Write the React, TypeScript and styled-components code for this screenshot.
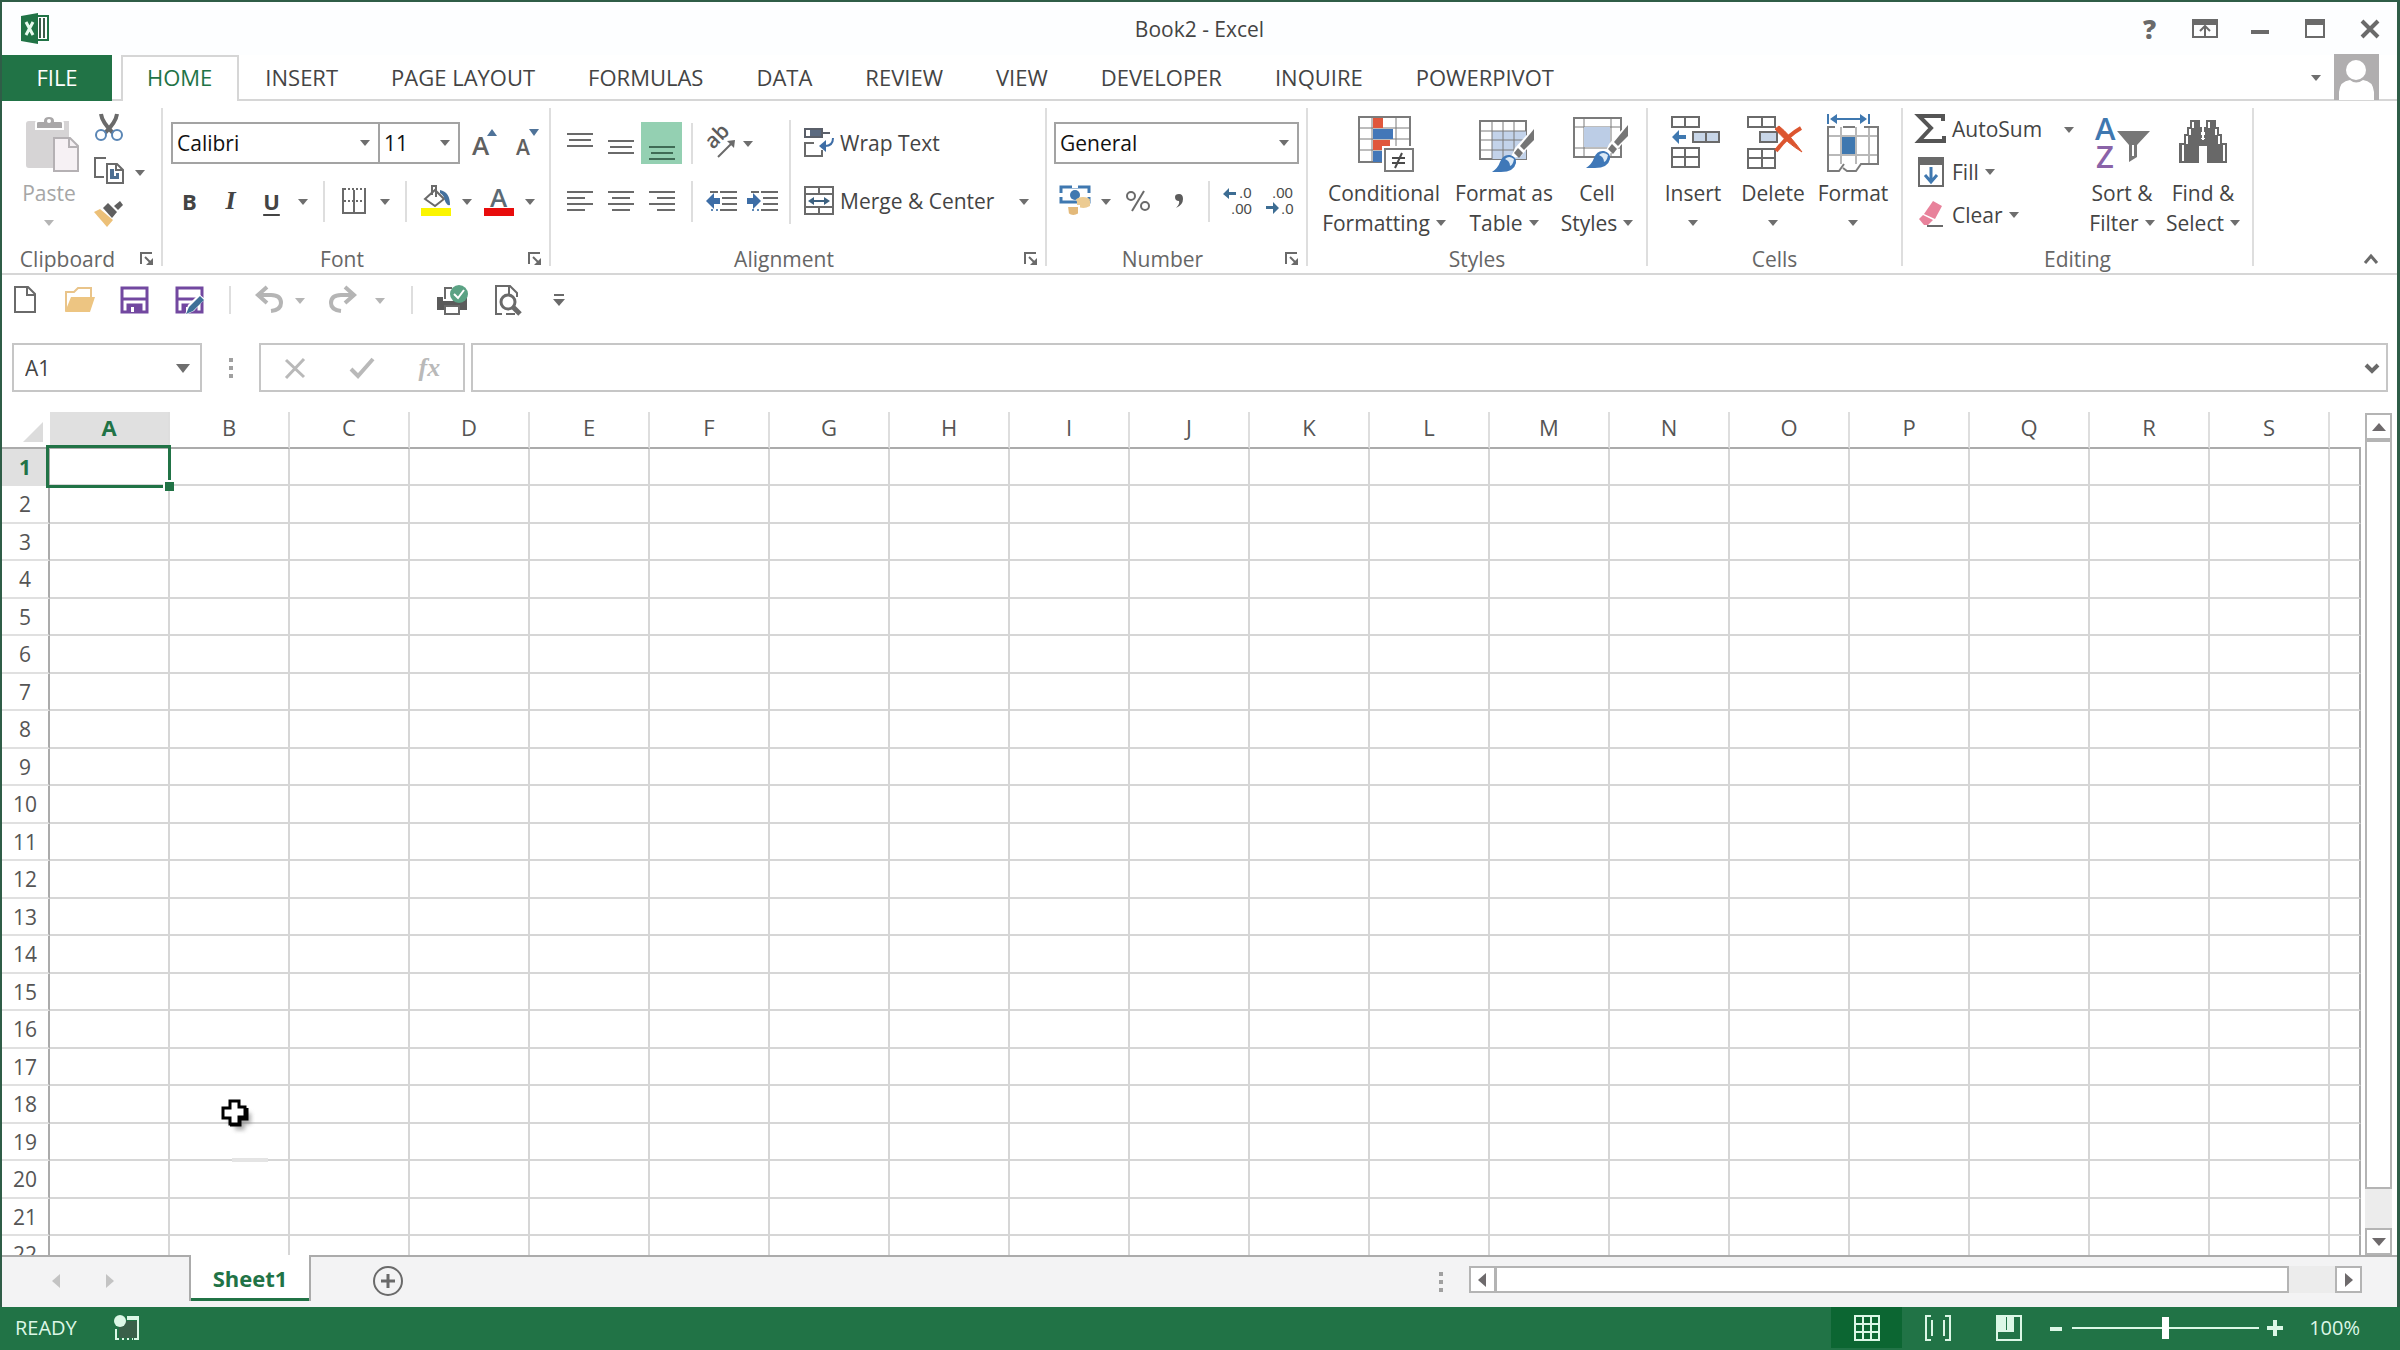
import React from "react";
import styled, { createGlobalStyle, css } from "styled-components";

const c = {
  green: "#217346",
  frame: "#2f5d47",
  ink: "#444444",
  mute: "#666666",
  icon: "#6a6a6a",
  blue: "#3f78b0",
  line: "#d6d6d6",
  edge: "#b4b4b4",
  off: "#b9b9b9",
  pale: "#dcf7e6",
};

const sans = `"Open Sans", "Noto Sans", "Liberation Sans", sans-serif`;
const serif = `"Liberation Serif", "DejaVu Serif", serif`;

const GlobalStyle = createGlobalStyle`
  *, *::before, *::after { box-sizing: border-box; }
  body { margin: 0; background: #fff; overflow: hidden; }
  button, select, input { font: inherit; color: inherit; }
  svg { overflow: visible; }
`;

/* ---------- window frame ---------- */

const Window = styled.div`
  display: flex;
  flex-direction: column;
  height: 100vh;
  font-family: ${sans};
  font-size: 21px;
  color: ${c.ink};
  background: #fff;
`;

const Frame = styled.div`
  flex: 1;
  min-height: 0;
  display: flex;
  flex-direction: column;
  border: solid ${c.frame};
  border-width: 2px 3px 0 2px;
`;

const Plain = styled.button`
  display: flex;
  align-items: center;
  justify-content: center;
  padding: 0;
  border: 0;
  background: none;
  white-space: nowrap;
`;

const TitleBar = styled.header`
  display: grid;
  grid-template-columns: 1fr auto 1fr;
  align-items: center;
  height: 53px;
  background: #fdfeff;
`;

const Brand = styled.div`
  display: flex;
  padding-left: 16px;
`;

const Title = styled.h1`
  margin: 0;
  font-size: 21px;
  font-weight: 400;
`;

const Controls = styled.div`
  display: flex;
  justify-content: flex-end;
`;

const Control = styled(Plain)`
  width: 55px;
  height: 44px;
  font-size: 26px;
  font-weight: 800;
  color: ${c.icon};
`;

/* ---------- tabs ---------- */

const TabRow = styled.nav`
  display: flex;
  height: 46px;
  border-bottom: 2px solid ${c.line};
`;

const FileTab = styled(Plain)`
  width: 110px;
  height: 46px;
  margin-right: 9px;
  padding-bottom: 2px;
  font-size: 22px;
  color: #fff;
  background: ${c.green};
`;

const Tab = styled(Plain)<{ $on?: boolean }>`
  height: 46px;
  padding: 0 27px 2px 26px;
  font-size: 22px;
  ${(p) =>
    p.$on &&
    css`
      padding: 0 25px 4px 24px;
      color: ${c.green};
      background: #fff;
      border: 2px solid ${c.line};
      border-bottom: 0;
    `}
`;

const Account = styled.div`
  display: flex;
  align-items: center;
  margin-left: auto;
  padding-right: 18px;
`;

/* ---------- ribbon ---------- */

const Ribbon = styled.section`
  display: flex;
  padding: 7px 0 3px;
  border-bottom: 2px solid ${c.line};
`;

const GroupBox = styled.section<{ $w: number }>`
  display: flex;
  flex-direction: column;
  width: ${(p) => p.$w}px;
`;

const GroupBody = styled.div<{ $pad?: number }>`
  display: flex;
  height: 140px;
  padding-left: ${(p) => p.$pad || 0}px;
`;

const GroupFoot = styled.div`
  display: flex;
  height: 22px;
  line-height: 22px;
  color: ${c.mute};
`;

const GroupName = styled.h2`
  flex: 1;
  margin: 0;
  font-size: 21px;
  font-weight: 400;
  text-align: center;
`;

const Launcher = styled(Plain)`
  width: 28px;
`;

const Divider = styled.div`
  width: 2px;
  height: 158px;
  background: #dedede;
`;

const Stack = styled.div<{ $w?: number; $pad?: number }>`
  display: flex;
  flex-direction: column;
  gap: 16px;
  padding: 14px 0 0 ${(p) => p.$pad || 0}px;
  ${(p) => p.$w && `width: ${p.$w}px;`}
`;

const Row = styled.div<{ $pad?: number }>`
  display: flex;
  align-items: center;
  height: 42px;
  padding-left: ${(p) => p.$pad || 0}px;
`;

const Triple = styled.div<{ $w?: number; $pad?: number }>`
  display: grid;
  grid-template-rows: repeat(3, 43px);
  align-content: start;
  padding-left: ${(p) => p.$pad || 0}px;
  ${(p) => p.$w && `width: ${p.$w}px;`}
`;

const Split = styled.div`
  display: flex;
`;

const Tool = styled(Plain)<{ $on?: boolean }>`
  width: 41px;
  height: 42px;
  font-size: 22px;
  background: ${(p) => (p.$on ? "#94d0b2" : "none")};
`;

const Bold = styled(Tool)`
  font-weight: 700;
`;
const Italic = styled(Tool)`
  font-family: ${serif};
  font-size: 26px;
  font-weight: 700;
  font-style: italic;
`;
const Under = styled(Tool)`
  font-weight: 700;
  text-decoration: underline;
  text-decoration-thickness: 2px;
  text-underline-offset: 4px;
`;

const Drop = styled(Plain)<{ $w?: number; $l?: number }>`
  width: ${(p) => p.$w || 22}px;
  height: 42px;
  margin-left: ${(p) => p.$l || 0}px;
  padding-top: 2px;
`;

const Bar = styled.div<{ $tall?: boolean }>`
  width: 2px;
  height: ${(p) => (p.$tall ? 104 : 41)}px;
  margin: ${(p) => (p.$tall ? "12px 0 0" : "0 8px 0 9px")};
  background: #dedede;
`;

const TextTool = styled(Plain)`
  justify-content: flex-start;
  height: 42px;
  gap: 6px;
`;

const Big = styled(Plain)<{ $w: number; $off?: boolean }>`
  flex-direction: column;
  justify-content: flex-start;
  gap: 6px;
  width: ${(p) => p.$w}px;
  height: 140px;
  padding-top: 4px;
  line-height: 30px;
  color: ${(p) => (p.$off ? "#a6a6a6" : c.ink)};
`;

const BigLabel = styled.span`
  display: flex;
  flex-direction: column;
  align-items: center;
`;

const Line2 = styled.span`
  display: flex;
  align-items: center;
  gap: 6px;
  height: 30px;
`;

const Pick = styled.label<{ $w: number; $join?: boolean }>`
  display: grid;
  align-items: center;
  width: ${(p) => p.$w}px;
  height: 42px;
  margin: ${(p) => (p.$join ? "0 4px 0 -2px" : "0")};
  border: 2px solid #a3a3a3;
  color: #111;
  & > * { grid-area: 1 / 1; }
  & > svg { justify-self: end; margin-right: 8px; pointer-events: none; }
`;

const Select = styled.select`
  width: 100%;
  height: 38px;
  padding: 0 20px 0 4px;
  border: 0;
  background: none;
  appearance: none;
`;

const Collapse = styled(Plain)`
  align-self: flex-end;
  width: 40px;
  height: 22px;
  margin: 0 6px 0 auto;
`;

/* ---------- quick access and formula bar ---------- */

const Quick = styled.div`
  display: flex;
  align-items: center;
  height: 50px;
  padding-left: 2px;
`;

const QuickTool = styled(Plain)<{ $w: number }>`
  width: ${(p) => p.$w}px;
  height: 40px;
`;

const QuickBar = styled.div<{ $l: number; $r: number }>`
  width: 2px;
  height: 28px;
  margin: 0 ${(p) => p.$r}px 0 ${(p) => p.$l}px;
  background: #dedede;
`;

const Formula = styled.div`
  display: flex;
  padding: 18px 9px 20px 10px;
`;

const Box = styled.div<{ $w?: number }>`
  display: flex;
  align-items: center;
  height: 49px;
  border: 2px solid #c6c6c6;
  ${(p) => (p.$w ? `width: ${p.$w}px;` : "flex: 1;")}
`;

const FormulaBox = styled(Box)`
  margin-left: 6px;
`;

const Field = styled.input`
  flex: 1;
  min-width: 0;
  height: 44px;
  padding: 0 0 0 11px;
  border: 0;
  outline: 0;
  background: none;
`;

const Grip = styled.div<{ $w: number }>`
  display: flex;
  align-items: center;
  justify-content: center;
  width: ${(p) => p.$w}px;
`;

const FormulaTool = styled(Plain)`
  flex: 1;
  height: 44px;
  color: ${c.off};
  font-family: ${serif};
  font-style: italic;
  font-size: 26px;
  font-weight: 700;
`;

/* ---------- sheet ---------- */

const Sheet = styled.main`
  flex: 1;
  min-height: 0;
  display: flex;
`;

const GridClip = styled.div`
  position: relative;
  flex: 1;
  min-width: 0;
  overflow: hidden;
`;

const Table = styled.table`
  width: 100%;
  table-layout: fixed;
  border-collapse: separate;
  border-spacing: 0;
`;

const ColHead = styled.th<{ $on?: boolean }>`
  height: 37px;
  padding: 0 0 5px;
  font-size: 22px;
  line-height: 24px;
  font-weight: ${(p) => (p.$on ? 700 : 400)};
  color: ${(p) => (p.$on ? c.green : "#555")};
  background: ${(p) => (p.$on ? "#e0e0e0" : "#fff")};
  border-right: 2px solid #dedede;
  border-bottom: 2px solid #ababab;
  &:last-child { border-right: 0; }
`;

const Corner = styled.td`
  height: 37px;
  padding: 0 6px 4px 0;
  text-align: right;
  vertical-align: bottom;
  line-height: 0;
  border-bottom: 2px solid #ababab;
`;

const RowHead = styled.th<{ $on?: boolean }>`
  padding: 0;
  font-size: 21px;
  line-height: 24px;
  font-weight: ${(p) => (p.$on ? 700 : 400)};
  color: ${(p) => (p.$on ? c.green : "#555")};
  background: ${(p) => (p.$on ? "#e0e0e0" : "#fff")};
  border-right: 2px solid #ababab;
  border-bottom: 2px solid #e0e0e0;
`;

const Cell = styled.td`
  position: relative;
  padding: 0;
  border-right: 2px solid ${c.line};
  border-bottom: 2px solid ${c.line};
  &:last-child { border-right-color: #ababab; }
`;

const Tr = styled.tr`
  height: 37px;
  &:nth-child(even) { height: 38px; }
`;

const Active = styled.div`
  position: absolute;
  z-index: 1;
  inset: -4px -3px -4px -4px;
  border: 3px solid ${c.green};
  &::after {
    content: "";
    position: absolute;
    right: -6px;
    bottom: -6px;
    width: 11px;
    height: 11px;
    background: ${c.green};
    border: solid #fff;
    border-width: 2px 0 0 2px;
  }
`;

const Pointer = styled.svg`
  position: absolute;
  left: 216px;
  top: 684px;
`;

const VScroll = styled.div`
  display: flex;
  flex-direction: column;
  width: 36px;
  padding: 1px 5px 0 4px;
`;

const Step = styled(Plain)`
  flex: none;
  width: 27px;
  height: 27px;
  border: 2px solid ${c.edge};
  background: #fff;
`;

const Thumb = styled.div<{ $grow: number; $dir: "x" | "y" }>`
  flex: ${(p) => p.$grow};
  background: #fff;
  border: 2px solid ${c.edge};
  ${(p) => (p.$dir === "x" ? "border-left-width: 1px;" : "")}
`;

const Track = styled.div`
  flex: 1;
  background: #ececec;
`;

/* ---------- sheet tabs ---------- */

const Bottom = styled.div`
  display: flex;
  height: 52px;
`;

const Strip = styled.div<{ $w?: string; $first?: boolean }>`
  display: flex;
  ${(p) => (p.$w ? `width: ${p.$w};` : "flex: 1;")}
  background: #f3f3f4;
  border-top: 2px solid #ababab;
  padding-left: ${(p) => (p.$first ? 28 : 0)}px;
`;

const Nav = styled(Plain)`
  width: 53px;
  height: 48px;
`;

const SheetTab = styled(Plain)`
  width: 122px;
  height: 46px;
  font-size: 22px;
  font-weight: 700;
  color: ${c.green};
  background: #fff;
  border: solid #ababab;
  border-width: 0 2px 0 2px;
  box-shadow: inset 0 -3px 0 ${c.green};
`;

const TabHolder = styled.div`
  background: #f3f3f4;
`;

const AddSheet = styled(Plain)`
  width: 154px;
  height: 48px;
`;

const HScroll = styled.div`
  flex: 1;
  display: flex;
  height: 27px;
  margin: 9px 35px 0 26px;
`;

/* ---------- status bar ---------- */

const Status = styled.footer`
  display: flex;
  align-items: center;
  height: 43px;
  padding: 0 40px 2px 15px;
  font-size: 20px;
  color: ${c.pale};
  background: ${c.green};
`;

const Ready = styled.span`
  margin-right: 36px;
`;

const ViewTool = styled(Plain)<{ $on?: boolean }>`
  width: 71px;
  height: 41px;
  background: ${(p) => (p.$on ? "#0c6632" : "none")};
`;

const Views = styled.div`
  display: flex;
  margin-left: auto;
`;

const ZoomStep = styled(Plain)`
  width: 24px;
  height: 41px;
`;

const Slider = styled.input`
  width: 187px;
  height: 24px;
  margin: 0 4px;
  appearance: none;
  background: linear-gradient(${c.pale}, ${c.pale}) center / 100% 2px no-repeat;
  &::-webkit-slider-thumb {
    appearance: none;
    width: 7px;
    height: 22px;
    background: #fff;
  }
`;

const Percent = styled.span`
  margin-left: 22px;
`;

/* ---------- icons ---------- */

type IcProps = { w?: number; h?: number; s?: string; sw?: number; children: React.ReactNode };
const Ic = ({ w = 30, h = 30, s = c.icon, sw = 2, children }: IcProps) => (
  <svg width={w} height={h} viewBox={`0 0 ${w} ${h}`} fill="none" stroke={s} strokeWidth={sw} aria-hidden="true">
    {children}
  </svg>
);

const Down = ({ off, big }: { off?: boolean; big?: boolean }) => (
  <svg width={big ? 14 : 10} height={big ? 9 : 6} viewBox="0 0 10 6" preserveAspectRatio="none" aria-hidden="true">
    <path d="M0 0H10L5 6Z" fill={off ? "#b5b5b5" : "#6e6e6e"} />
  </svg>
);

const Arrowhead = ({ d, off }: { d: "l" | "r" | "u" | "d"; off?: boolean }) => {
  const path = { l: "M10 0V14L2 7Z", r: "M3 0V14L11 7Z", u: "M0 11H14L7 3Z", d: "M0 3H14L7 11Z" }[d];
  return (
    <svg width="14" height="14" viewBox="0 0 14 14" aria-hidden="true">
      <path d={path} fill={off ? "#c3c3c3" : "#6e6a6c"} />
    </svg>
  );
};

const Logo = () => (
  <Ic w={34} h={32} s="none">
    <path d="M17 3H30V27H17Z" fill="#fff" stroke={c.green} />
    <path d="M22 5V25M26 5V25" stroke="#3d5c4a" strokeWidth="2" />
    <path d="M3 3L20 0V31L3 28Z" fill={c.green} />
    <path d="M8 9L15 22M15 9L8 22" stroke="#e8fbee" strokeWidth="3" />
  </Ic>
);

const Lines = ({ rows, on }: { rows: [number, number, number][]; on?: boolean }) => (
  <Ic w={28} h={36} s={on ? "#3f6b55" : c.icon}>
    {rows.map(([y, a, b]) => (
      <path key={y} d={`M${a} ${y}H${b}`} />
    ))}
  </Ic>
);

const PasteIcon = () => (
  <Ic w={60} h={60} s="none">
    <path d="M10 9H50V26H34V56H10Q7 56 7 53V12Q7 9 10 9Z" fill="#d6d4d5" />
    <path d="M17 17V11Q17 9 20 9H24Q24 4 30 4T36 9H41Q44 9 44 11V17Z" fill="#a9a7a8" stroke="#fff" strokeWidth="2" />
    <circle cx="30" cy="9" r="2" fill="#fff" />
    <path d="M35 26H51L59 34V59H35Z" fill="#f6f1f4" stroke="#b5b1b4" strokeWidth="2" />
    <path d="M50 26V35H59" stroke="#b5b1b4" strokeWidth="2" />
  </Ic>
);

const CutIcon = () => (
  <Ic>
    <path d="M7 0Q8 8 19 19M23 0Q22 8 11 19" strokeWidth="4" />
    <circle cx="7" cy="21" r="5" stroke="#5a86b5" />
    <circle cx="23" cy="21" r="5" stroke="#5a86b5" />
  </Ic>
);

const CopyIcon = () => (
  <Ic>
    <path d="M10 20H1V1H12" />
    <path d="M13 7H23L29 13V26H13Z" fill="#fff" />
    <path d="M16 12V22H25V16H22V19H20V12Z" fill="#4d6f92" stroke="none" />
    <path d="M22 7V13H29" />
  </Ic>
);

const PainterIcon = () => (
  <Ic s="none">
    <path d="M0 12L6 9L19 20L13 27Z" fill="#ecc078" />
    <path d="M9 8L14 3L23 12L18 18Z" fill="#5f5f5f" />
    <path d="M20 6L26 1L29 5L24 10Z" fill="#5f5f5f" />
  </Ic>
);

const LaunchIcon = () => (
  <Ic w={14} h={14}>
    <path d="M1 12V1H12" />
    <path d="M5 5L11 11" />
    <path d="M13 6V13H6Z" fill={c.icon} stroke="none" />
  </Ic>
);

const SizeIcon = ({ up }: { up?: boolean }) => (
  <Ic w={32} h={34} s="none">
    <text x={up ? 3 : 6} y="29" fontFamily="Open Sans" fontWeight="600" fontSize={up ? 26 : 21} fill="#606060">A</text>
    {up ? <path d="M18 10L23 3L28 10Z" fill="#4f7399" /> : <path d="M19 3H29L24 10Z" fill="#4f7399" />}
  </Ic>
);

const BorderIcon = () => (
  <Ic w={26} h={26}>
    <path d="M2 0V25H24V0" />
    <path d="M13 2V24" />
    <path d="M3 1H24M3 13H24" strokeDasharray="2 2" />
  </Ic>
);

const FillIcon = () => (
  <Ic w={32} h={34} s="none">
    <path d="M5 15L15 6L24 15L15 22Z" fill="#fff" stroke={c.icon} strokeWidth="2" />
    <path d="M12 11V2H16V13" stroke={c.icon} strokeWidth="2" />
    <path d="M20 6Q30 8 30 21Q27 22 25 17Q24 11 20 9Z" fill="#44719e" />
    <path d="M1 24H31V32H1Z" fill="#fbf500" />
  </Ic>
);

const FontColorIcon = () => (
  <Ic w={32} h={34} s="none">
    <text x="7" y="23" fontFamily="Open Sans" fontWeight="600" fontSize="26" fill="#5c6a74">A</text>
    <path d="M1 24H31V32H1Z" fill="#e80c0c" />
  </Ic>
);

const AngleIcon = () => (
  <Ic w={34} h={34}>
    <text x="0" y="0" transform="translate(8 24) rotate(-45)" fontFamily="Open Sans" fontWeight="600" fontSize="21" fill="#5c5c5c" stroke="none">ab</text>
    <path d="M13 31L28 16" />
    <path d="M30 14L22 15L29 22Z" fill={c.icon} stroke="none" />
  </Ic>
);

const IndentIcon = ({ out }: { out?: boolean }) => (
  <Ic w={32} h={24}>
    <path d="M4 3H12M14 3H31M16 9H31M16 15H31M14 21H31" />
    <path d="M5 21H13" strokeDasharray="2 3" stroke="#5f88b5" />
    {out ? (
      <path d="M0 12L8 4V9H14V15H8V20Z" fill="#3d6da6" stroke="none" />
    ) : (
      <path d="M14 12L6 4V9H0V15H6V20Z" fill="#3d6da6" stroke="none" />
    )}
  </Ic>
);

const WrapIcon = () => (
  <Ic>
    <path d="M1 1H18V9H1Z" fill="#5b6a80" stroke="#5a5f69" />
    <path d="M2 2H6V8H2Z" fill="#fff" stroke="none" />
    <path d="M18 5H26" stroke="#5a5f69" />
    <path d="M10 15H1V28H18V22" />
    <path d="M29 10Q29 18 21 18" stroke="#3d6da6" />
    <path d="M15 18L22 12V24Z" fill="#3d6da6" stroke="none" />
  </Ic>
);

const MergeIcon = () => (
  <Ic>
    <path d="M1 1H29V28H1ZM1 8H29M1 21H29M15 1V8M15 21V28" />
    <path d="M6 15H24" stroke="#3d6180" />
    <path d="M4 15L10 11V19ZM26 15L20 11V19Z" fill="#3d6180" stroke="none" />
  </Ic>
);

const MoneyIcon = () => (
  <Ic w={32} h={32} s="none">
    <path d="M2 2H30V17H2Z" fill="#fff" stroke={c.blue} strokeWidth="3" />
    <path d="M0 8H4V12H0ZM28 8H32V12H28ZM13 0H19V3H13Z" fill="#fff" />
    <circle cx="16" cy="10" r="5" fill={c.blue} />
    <ellipse cx="24" cy="15" rx="7" ry="3" fill="#eccb92" />
    <path d="M18 16H31V21Q24 25 18 21Z" fill="#eccb92" />
    <path d="M8 21H20V29Q14 33 9 29Z" fill="#e3b97a" stroke="#fff" />
  </Ic>
);

const DecimalIcon = ({ more }: { more?: boolean }) => (
  <Ic w={32} h={32} s="none">
    <text fontFamily="Liberation Sans" fontSize="15" fill="#4c4c4c">
      <tspan x={more ? 16 : 8} y="13">{more ? ".0" : ".00"}</tspan>
      <tspan x={more ? 8 : 17} y="29">{more ? ".00" : ".0"}</tspan>
    </text>
    {more ? (
      <path d="M0 9L6 3V7H13V10H6V14Z" fill="#3d6d93" />
    ) : (
      <path d="M15 23L9 17V21H2V24H9V29Z" fill="#3d6d93" />
    )}
  </Ic>
);

const CondIcon = () => (
  <Ic w={60} h={60} s="#7b7b7b">
    <path d="M5 5H56V50H5Z" fill="#fff" />
    <path d="M18 5V50M42 5V50M5 16H56M5 27H56M5 38H56" strokeWidth="1" />
    <path d="M19 6H29V16H19ZM19 28H36V38H19Z" fill="#e0573c" stroke="none" />
    <path d="M19 17H39V27H19ZM19 39H29V50H19Z" fill="#4377b8" stroke="none" />
    <path d="M28 34H60V60H28Z" fill="#fff" stroke="none" />
    <path d="M31 37H59V59H31Z" fill="#fff" />
    <path d="M38 46H51M38 51H51M48 41L41 56" stroke="#4a4a4a" />
  </Ic>
);

const Brush = () => (
  <g stroke="none">
    <path d="M60 15V29L47 44L36 47L41 36Z" fill="#fff" />
    <path d="M60 17V28L50 38L46 34Z" fill="#757575" />
    <path d="M44 36L49 41L45 46L40 41Z" fill="#757575" />
    <path d="M18 60Q24 56 26 50Q29 42 36 43Q43 45 42 51Q40 60 27 60Z" fill="#3f78b8" />
    <path d="M31 47Q35 43 40 47Q39 53 36 54Q36 49 31 47Z" fill="#dceaf7" />
  </g>
);

const TableIcon = () => (
  <Ic w={60} h={60} s="#7b7b7b">
    <path d="M6 9H52V47H6Z" fill="#fff" />
    <path d="M18 19H52V47H18Z" fill="#c3d3ea" stroke="none" />
    <path d="M18 9V47M29 9V47M40 9V47M6 19H52M6 28H52M6 38H52" strokeWidth="1" />
    <Brush />
  </Ic>
);

const CellStyleIcon = () => (
  <Ic w={60} h={60} s="#7b7b7b">
    <path d="M7 6H54V45H7Z" fill="#fff" />
    <path d="M17 6V45M44 6V45M7 15H54M7 36H54" strokeWidth="1" />
    <path d="M17 15H43V35H17Z" fill="#bccde6" stroke="none" />
    <g transform="translate(1 -4)"><Brush /></g>
  </Ic>
);

const InsertIcon = () => (
  <Ic w={60} h={60}>
    <path d="M9 5H36V15H9ZM22 5V15M9 36H36V55H9ZM22 36V55M9 45H36" />
    <path d="M30 20H56V30H30ZM43 20V30" fill="#c8d6e8" />
    <path d="M9 25L16 18V23H23V27H16V32Z" fill={c.blue} stroke="none" />
  </Ic>
);

const DeleteIcon = () => (
  <Ic w={60} h={60}>
    <path d="M5 5H32V15H5ZM19 5V15M5 37H32V56H5ZM19 37V56M5 46H32" />
    <path d="M17 20H34V30H17Z" fill="#c8d6e8" />
    <path d="M32 17L36 14Q46 22 59 40Q44 31 32 17Z" fill="#dc552f" stroke="#dc552f" strokeWidth="1" />
    <path d="M58 16Q44 24 33 39" stroke="#dc552f" strokeWidth="4" />
  </Ic>
);

const FormatIcon = () => (
  <Ic w={60} h={60} s="#7b7b7b">
    <path d="M5 2V12M46 2V12M12 7H39" stroke={c.blue} />
    <path d="M7 7L14 2V12ZM44 7L37 2V12Z" fill={c.blue} stroke="none" />
    <path d="M18 15V52M33 15V52M46 15V52M5 24H55M5 43H55" stroke="#b9b9b9" />
    <path d="M12 15H5V59H16L21 52M20 15H32M41 15H55V52H38L33 59H24L20 56" />
    <path d="M19 25H32V42H19Z" fill={c.blue} stroke="none" />
  </Ic>
);

const SumIcon = () => (
  <Ic>
    <path d="M27 7V2H3L15 14L3 27H28V22" stroke="#555" strokeWidth="4" />
  </Ic>
);

const FillDownIcon = () => (
  <Ic>
    <path d="M3 1H27V29H3Z" fill="#fff" />
    <path d="M3 1H27V7H3Z" fill={c.icon} />
    <path d="M15 10V24M9 18L15 25L21 18" stroke={c.blue} strokeWidth="3" />
  </Ic>
);

const EraserIcon = () => (
  <Ic s="none">
    <path d="M17 1L26 6L19 19L8 14Z" fill="#e8829b" />
    <path d="M7 15L17 20L12 25H8L3 19Z" fill="#e8829b" />
    <path d="M11 26H27" stroke={c.icon} strokeWidth="2" />
  </Ic>
);

const SortIcon = () => (
  <Ic w={60} h={60} s="none">
    <text fontFamily="Open Sans" fontWeight="600" fontSize="31">
      <tspan x="3" y="28" fill={c.blue}>A</tspan>
      <tspan x="4" y="56" fill="#8a63a8">Z</tspan>
    </text>
    <path d="M25 19H58L45 33V45L37 50V33Z" fill="#777" />
    <path d="M41 33V44" stroke="#fff" strokeWidth="2" />
  </Ic>
);

const FindIcon = () => (
  <Ic w={60} h={60} s="none">
    <path d="M17 8H27V15H29V28H31V15H33V8H43V15H46V22H49V31H54V51H34V34H26V51H6V31H11V22H14V15H17Z" fill="#686868" />
    <path d="M19 10H21V16H19ZM35 10H37V16H35ZM16 17H18V23H16ZM42 17H44V23H42ZM13 24H15V32H13ZM45 24H47V32H45ZM9 33H11V49H9ZM50 33H52V49H50ZM28 20H32V23H28ZM28 26H32V27H28Z" fill="#fff" />
  </Ic>
);

const NewIcon = () => (
  <Ic>
    <path d="M5 2H18L25 9V27H5Z" />
    <path d="M17 2V10H25" />
  </Ic>
);
const OpenIcon = () => (
  <Ic w={32}>
    <path d="M2 26V7H10L14 3H27V12" stroke="#e9c48a" />
    <path d="M7 12H31L26 27H1Z" fill="#edc582" stroke="none" />
  </Ic>
);
const SaveIcon = ({ edit }: { edit?: boolean }) => (
  <Ic s="#7248a0" sw={3}>
    <path d="M3 3H28V27H3Z" />
    <path d="M3 14H28" />
    <path d="M9 27V20H22V27" fill="#7248a0" />
    <path d="M12 22H15V27H12Z" fill="#fff" stroke="none" />
    {edit && (
      <>
        <path d="M11 30L14 20L25 9L31 14L20 26Z" fill="#fff" stroke="none" />
        <path d="M12 29L15 22L26 11L30 15L19 26Z" fill="#3e7098" stroke="none" />
      </>
    )}
  </Ic>
);
const UndoIcon = ({ redo }: { redo?: boolean }) => (
  <Ic s="#b5b5b5" sw={4}>
    <g transform={redo ? "translate(30 0) scale(-1 1)" : undefined}>
      <path d="M5 10H17Q27 10 27 18Q27 25 17 26" />
      <path d="M13 2L4 10L13 18" />
    </g>
  </Ic>
);
const PrintIcon = () => (
  <Ic w={32}>
    <path d="M9 14V3H16" />
    <path d="M1 12H7V16H25V13H31V25H24V20H8V25H1Z" fill="#5b5b5b" stroke="none" />
    <path d="M9 21H23V29H9Z" fill="#fff" />
    <circle cx="23" cy="9" r="9" fill="#5ba284" stroke="none" />
    <path d="M18 9L22 13L28 5" stroke="#fff" />
  </Ic>
);
const PreviewIcon = () => (
  <Ic>
    <path d="M9 29H3V1H17L24 8V12M16 1V9M13 29H22" />
    <circle cx="15" cy="17" r="7" fill="#fff" strokeWidth="3" />
    <path d="M20 22L27 29" strokeWidth="5" />
  </Ic>
);
const Dots = () => (
  <svg width="4" height="20" viewBox="0 0 4 20" aria-hidden="true">
    <path d="M0 0H4V4H0ZM0 8H4V12H0ZM0 16H4V20H0Z" fill="#a0a0a0" />
  </svg>
);

/* ---------- parts ---------- */

const Group = ({ name, w, pad, launch, children }: {
  name: string; w: number; pad?: number; launch?: boolean; children: React.ReactNode;
}) => (
  <>
    <GroupBox $w={w}>
      <GroupBody $pad={pad}>{children}</GroupBody>
      <GroupFoot>
        <GroupName>{name}</GroupName>
        {launch && <Launcher aria-label={`${name} settings`}><LaunchIcon /></Launcher>}
      </GroupFoot>
    </GroupBox>
    <Divider />
  </>
);

const BigButton = ({ icon, top, second, w, off }: {
  icon: React.ReactNode; top: string; second?: string; w: number; off?: boolean;
}) => (
  <Big $w={w} $off={off}>
    {icon}
    <BigLabel>
      <span>{top}</span>
      <Line2>{second}<Down off={off} /></Line2>
    </BigLabel>
  </Big>
);

const Choice = ({ label, value, w, join }: { label: string; value: string; w: number; join?: boolean }) => (
  <Pick $w={w} $join={join}>
    <Select aria-label={label} defaultValue={value}><option>{value}</option></Select>
    <Down />
  </Pick>
);

const tabs = ["HOME", "INSERT", "PAGE LAYOUT", "FORMULAS", "DATA", "REVIEW", "VIEW", "DEVELOPER", "INQUIRE", "POWERPIVOT"];
const columns = "ABCDEFGHIJKLMNOPQRS".split("");
const rowNumbers = Array.from({ length: 22 }, (_, i) => i + 1);

export default function App() {
  return (
    <Window>
      <GlobalStyle />
      <Frame>
        <TitleBar>
          <Brand><Logo /></Brand>
          <Title>Book2 - Excel</Title>
          <Controls>
            <Control aria-label="Help">?</Control>
            <Control aria-label="Ribbon display options">
              <Ic w={26} h={20}><path d="M1 1H25V18H1Z" /><path d="M1 1H25V5H1Z" fill={c.icon} /><path d="M13 17V8M8 12L13 7L18 12" /></Ic>
            </Control>
            <Control aria-label="Minimize"><Ic w={18} h={16} sw={4}><path d="M0 11H18" /></Ic></Control>
            <Control aria-label="Maximize"><Ic w={20} h={20}><path d="M1 1H19V18H1Z" /><path d="M1 1H19V5H1Z" fill={c.icon} /></Ic></Control>
            <Control aria-label="Close"><Ic w={20} h={20} sw={4}><path d="M2 2L18 18M18 2L2 18" /></Ic></Control>
          </Controls>
        </TitleBar>

        <TabRow>
          <FileTab>FILE</FileTab>
          {tabs.map((t, i) => <Tab key={t} $on={i === 0}>{t}</Tab>)}
          <Account>
            <Drop $w={36} aria-label="Account menu"><Down /></Drop>
            <svg width="45" height="46" viewBox="0 0 45 46" role="img" aria-label="Account picture">
              <path d="M0 0H45V46H0Z" fill="#b0aeaf" />
              <circle cx="22" cy="16" r="10" fill="#fff" />
              <path d="M5 46V38Q6 27 16 26Q22 31 29 26Q39 27 40 38V46Z" fill="#fff" />
            </svg>
          </Account>
        </TabRow>

        <Ribbon>
          <Group name="Clipboard" w={159} pad={14} launch>
            <BigButton w={66} icon={<PasteIcon />} top="Paste" off />
            <Triple $pad={6}>
              <Tool aria-label="Cut"><CutIcon /></Tool>
              <Split>
                <Tool aria-label="Copy"><CopyIcon /></Tool>
                <Drop aria-label="Copy options"><Down /></Drop>
              </Split>
              <Tool aria-label="Format painter"><PainterIcon /></Tool>
            </Triple>
          </Group>

          <Group name="Font" w={386} launch>
            <Stack>
              <Row $pad={8}>
                <Choice label="Font" value="Calibri" w={209} />
                <Choice label="Font size" value="11" w={82} join />
                <Tool aria-label="Increase font size"><SizeIcon up /></Tool>
                <Tool aria-label="Decrease font size"><SizeIcon /></Tool>
              </Row>
              <Row $pad={6}>
                <Bold>B</Bold>
                <Italic>I</Italic>
                <Under>U</Under>
                <Drop aria-label="Underline options"><Down /></Drop>
                <Bar />
                <Tool aria-label="Borders"><BorderIcon /></Tool>
                <Drop aria-label="Border options"><Down /></Drop>
                <Bar />
                <Tool aria-label="Fill color"><FillIcon /></Tool>
                <Drop aria-label="Fill color options"><Down /></Drop>
                <Tool aria-label="Font color"><FontColorIcon /></Tool>
                <Drop aria-label="Font color options"><Down /></Drop>
              </Row>
            </Stack>
          </Group>

          <Group name="Alignment" w={494} launch>
            <Stack $w={238} $pad={8}>
              <Row>
                <Tool aria-label="Top align"><Lines rows={[[9, 1, 27], [15, 3, 25], [21, 1, 27]]} /></Tool>
                <Tool aria-label="Middle align"><Lines rows={[[16, 1, 27], [22, 3, 25], [28, 1, 27]]} /></Tool>
                <Tool $on aria-label="Bottom align"><Lines on rows={[[22, 1, 27], [28, 3, 25], [34, 1, 27]]} /></Tool>
                <Bar />
                <Tool aria-label="Orientation"><AngleIcon /></Tool>
                <Drop $w={12} aria-label="Orientation options"><Down /></Drop>
              </Row>
              <Row>
                <Tool aria-label="Align left"><Lines rows={[[9, 1, 27], [15, 1, 19], [21, 1, 27], [27, 1, 19]]} /></Tool>
                <Tool aria-label="Center"><Lines rows={[[9, 1, 27], [15, 5, 23], [21, 1, 27], [27, 5, 23]]} /></Tool>
                <Tool aria-label="Align right"><Lines rows={[[9, 1, 27], [15, 9, 27], [21, 1, 27], [27, 9, 27]]} /></Tool>
                <Bar />
                <Tool aria-label="Decrease indent"><IndentIcon out /></Tool>
                <Tool aria-label="Increase indent"><IndentIcon /></Tool>
              </Row>
            </Stack>
            <Bar $tall />
            <Stack $pad={13}>
              <Row><TextTool><WrapIcon />Wrap Text</TextTool></Row>
              <Row>
                <TextTool><MergeIcon />Merge &amp; Center</TextTool>
                <Drop $l={19} aria-label="Merge options"><Down /></Drop>
              </Row>
            </Stack>
          </Group>

          <Group name="Number" w={259} launch>
            <Stack $pad={7}>
              <Row><Choice label="Number format" value="General" w={245} /></Row>
              <Row>
                <Tool aria-label="Accounting format"><MoneyIcon /></Tool>
                <Drop aria-label="Accounting options"><Down /></Drop>
                <Tool aria-label="Percent style"><Ic w={26} h={24} sw={2}><circle cx="6" cy="7" r="4" /><circle cx="20" cy="17" r="4" /><path d="M19 2L7 22" /></Ic></Tool>
                <Tool aria-label="Comma style"><Ic w={14} h={16} s="none"><path d="M3 4Q3 1 7 1Q11 1 11 6Q11 12 4 15Q8 11 7 8Q3 8 3 4Z" fill="#5c5c5c" /></Ic></Tool>
                <Bar />
                <Tool aria-label="Increase decimal"><DecimalIcon more /></Tool>
                <Tool aria-label="Decrease decimal"><DecimalIcon /></Tool>
              </Row>
            </Stack>
          </Group>

          <Group name="Styles" w={338} pad={9}>
            <BigButton w={134} icon={<CondIcon />} top="Conditional" second="Formatting" />
            <BigButton w={106} icon={<TableIcon />} top="Format as" second="Table" />
            <BigButton w={80} icon={<CellStyleIcon />} top="Cell" second="Styles" />
          </Group>

          <Group name="Cells" w={253} pad={5}>
            <BigButton w={80} icon={<InsertIcon />} top="Insert" />
            <BigButton w={80} icon={<DeleteIcon />} top="Delete" />
            <BigButton w={80} icon={<FormatIcon />} top="Format" />
          </Group>

          <Group name="Editing" w={349}>
            <Triple $w={179} $pad={13}>
              <Split>
                <TextTool><SumIcon />AutoSum</TextTool>
                <Drop $l={16} aria-label="AutoSum options"><Down /></Drop>
              </Split>
              <TextTool><FillDownIcon />Fill<Down /></TextTool>
              <TextTool><EraserIcon />Clear<Down /></TextTool>
            </Triple>
            <BigButton w={80} icon={<SortIcon />} top="Sort &" second="Filter" />
            <BigButton w={82} icon={<FindIcon />} top="Find &" second="Select" />
          </Group>
          <Collapse aria-label="Collapse ribbon"><Ic w={16} h={12} sw={3}><path d="M2 10L8 3L14 10" /></Ic></Collapse>
        </Ribbon>

        <Quick>
          <QuickTool $w={41} aria-label="New"><NewIcon /></QuickTool>
          <QuickTool $w={69} aria-label="Open"><OpenIcon /></QuickTool>
          <QuickTool $w={40} aria-label="Save"><SaveIcon /></QuickTool>
          <QuickTool $w={70} aria-label="Save as"><SaveIcon edit /></QuickTool>
          <QuickBar $l={5} $r={17} />
          <QuickTool $w={41} aria-label="Undo"><UndoIcon /></QuickTool>
          <Drop aria-label="Undo history"><Down off /></Drop>
          <QuickTool $w={64} aria-label="Redo"><UndoIcon redo /></QuickTool>
          <Drop $w={10} aria-label="Redo history"><Down off /></Drop>
          <QuickBar $l={26} $r={18} />
          <QuickTool $w={41} aria-label="Quick print"><PrintIcon /></QuickTool>
          <QuickTool $w={71} aria-label="Print preview"><PreviewIcon /></QuickTool>
          <QuickTool $w={31} aria-label="Customize quick access toolbar"><Ic w={12} h={14}><path d="M1 2H11" /><path d="M0 6H12L6 13Z" fill={c.icon} stroke="none" /></Ic></QuickTool>
        </Quick>

        <Formula>
          <Box $w={190}>
            <Field aria-label="Name box" defaultValue="A1" />
            <Drop $w={34} aria-label="Names"><Down big /></Drop>
          </Box>
          <Grip $w={57}><Dots /></Grip>
          <Box $w={206}>
            <FormulaTool aria-label="Cancel"><Ic w={22} h={22} s={c.off} sw={3}><path d="M2 3L20 20M20 2L2 21" /></Ic></FormulaTool>
            <FormulaTool aria-label="Enter"><Ic w={26} h={22} s={c.off} sw={4}><path d="M2 12L9 19L24 2" /></Ic></FormulaTool>
            <FormulaTool aria-label="Insert function">fx</FormulaTool>
          </Box>
          <FormulaBox>
            <Field aria-label="Formula" />
            <Drop $w={28} aria-label="Expand formula bar"><Ic w={16} h={12} sw={4}><path d="M2 2L8 8L14 2" /></Ic></Drop>
          </FormulaBox>
        </Formula>

        <Sheet>
          <GridClip>
            <Table>
              <colgroup>
                <col width="48" />
                {columns.map((k) => <col key={k} width="120" />)}
                <col />
              </colgroup>
              <thead>
                <tr>
                  <Corner><Ic w={22} h={22} s="none"><path d="M21 1V21H1Z" fill="#dcdcdc" /></Ic></Corner>
                  {columns.map((k, i) => <ColHead key={k} scope="col" $on={i === 0}>{k}</ColHead>)}
                  <ColHead aria-hidden="true" />
                </tr>
              </thead>
              <tbody>
                {rowNumbers.map((n) => (
                  <Tr key={n}>
                    <RowHead scope="row" $on={n === 1}>{n}</RowHead>
                    {columns.map((k) => <Cell key={k}>{n === 1 && k === "A" && <Active />}</Cell>)}
                    <Cell />
                  </Tr>
                ))}
              </tbody>
            </Table>
            <Pointer width="60" height="70" viewBox="0 0 60 70" aria-hidden="true">
              <defs>
                <filter id="soft" x="-30%" y="-30%" width="170%" height="170%"><feGaussianBlur stdDeviation="2" /></filter>
              </defs>
              <path d="M12 8H22V13H28V24H22V30H12V24H6V13H12Z" transform="translate(5 4)" fill="#777" opacity="0.6" filter="url(#soft)" />
              <path d="M12 5H21V11H27V21H21V28H12V22H5V12H12Z" fill="#fff" stroke="#000" strokeWidth="3" />
              <path d="M12 29H22V23H29V12" fill="none" stroke="#000" strokeWidth="3" />
              <path d="M14 64H50" stroke="#e4e4e4" strokeWidth="4" />
            </Pointer>
          </GridClip>
          <VScroll role="group" aria-label="Vertical scroll">
            <Step aria-label="Scroll up"><Arrowhead d="u" /></Step>
            <Thumb $grow={19} $dir="y" />
            <Track />
            <Step aria-label="Scroll down"><Arrowhead d="d" /></Step>
          </VScroll>
        </Sheet>

        <Bottom>
          <Strip $first $w="187px">
            <Nav aria-label="Previous sheet"><Arrowhead d="l" off /></Nav>
            <Nav aria-label="Next sheet"><Arrowhead d="r" off /></Nav>
          </Strip>
          <TabHolder><SheetTab>Sheet1</SheetTab></TabHolder>
          <Strip>
            <AddSheet aria-label="New sheet"><Ic w={32} h={32}><circle cx="16" cy="16" r="14" /><path d="M16 9V23M9 16H23" strokeWidth="3" /></Ic></AddSheet>
          </Strip>
          <Strip $w="40%">
            <Grip $w={4}><Dots /></Grip>
            <HScroll role="group" aria-label="Horizontal scroll">
              <Step aria-label="Scroll left"><Arrowhead d="l" /></Step>
              <Thumb $grow={17} $dir="x" />
              <Track />
              <Step aria-label="Scroll right"><Arrowhead d="r" /></Step>
            </HScroll>
          </Strip>
        </Bottom>
      </Frame>

      <Status>
        <Ready>READY</Ready>
        <Ic w={28} h={28} s={c.pale}>
          <path d="M6 7H24V24H6Z" fill="#3a5f49" stroke="none" />
          <circle cx="7" cy="7" r="6" fill={c.pale} stroke="none" />
          <path d="M14 3H26M14 5H26" />
          <path d="M25 4V25H21M3 15V25H6" />
          <path d="M9 25H20" strokeDasharray="2 3" />
        </Ic>
        <Views>
          <ViewTool $on aria-label="Normal view"><Ic w={26} h={26} s={c.pale}><path d="M1 1H25V25H1ZM9 1V25M17 1V25M1 9H25M1 17H25" /></Ic></ViewTool>
          <ViewTool aria-label="Page layout view"><Ic w={28} h={26} s={c.pale}><path d="M7 1H2V25H7M21 1H26V25H21M8 5V21M20 5V21" /></Ic></ViewTool>
          <ViewTool aria-label="Page break view"><Ic w={28} h={26} s={c.pale}><path d="M2 1H26V25H2Z" /><path d="M2 1H9V16H2ZM12 1H18V16H12Z" fill={c.pale} stroke="none" /><path d="M2 16H18V1M10 1V16" /></Ic></ViewTool>
        </Views>
        <ZoomStep aria-label="Zoom out"><Ic w={12} h={14} s={c.pale} sw={4}><path d="M0 8H12" /></Ic></ZoomStep>
        <Slider type="range" aria-label="Zoom" defaultValue={50} />
        <ZoomStep aria-label="Zoom in"><Ic w={16} h={16} s={c.pale} sw={4}><path d="M0 8H16M8 0V16" /></Ic></ZoomStep>
        <Percent>100%</Percent>
      </Status>
    </Window>
  );
}
